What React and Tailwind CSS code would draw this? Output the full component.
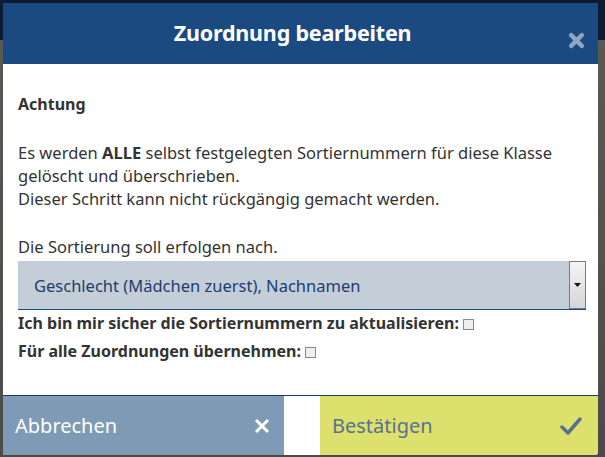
import React from 'react';

const font = { fontFamily: '"Noto Sans", "Open Sans", sans-serif' };

const Box = () => (
    <span className="inline-block w-[11px] h-[11px] ml-[4px] border border-[#8a8a8a] bg-[#eeeeee] align-[-1px]" />
);

const App = () => {
    return (
        <div
            className="w-[605px] h-[457px] pl-[3px] pt-[3px] bg-[linear-gradient(to_bottom,#0b1b33_0,#0b1b33_40px,#5a5a52_40px,#4a4a4a_100%)]"
            style={font}
        >
            <div className="w-[595px] h-[452px] flex flex-col bg-white rounded-br-[3px] overflow-hidden">
                <div className="relative h-[61px] shrink-0 flex items-center justify-center pr-[16px] bg-[#1b4a80]">
                    <h1 className="text-[21.5px] font-bold text-white tracking-[-0.2px]">Zuordnung bearbeiten</h1>
                    <span className="absolute right-[13px] top-[29px] text-[#8ea4c2]">
                        <svg width="17" height="17" viewBox="0 0 16 16">
                            <path d="M3 3 L13 13 M13 3 L3 13" stroke="currentColor" strokeWidth="4.2" strokeLinecap="round" />
                        </svg>
                    </span>
                </div>

                <div className="flex-1 pl-[15px] pr-[12px] pt-[29px] text-[16.5px] text-[#333] leading-[23px]">
                    <p className="font-bold text-[16px]">Achtung</p>
                    <p className="mt-[25px]">
                        Es werden <b>ALLE</b> selbst festgelegten Sortiernummern für diese Klasse
                        <br />
                        gelöscht und überschrieben.
                        <br />
                        Dieser Schritt kann nicht rückgängig gemacht werden.
                    </p>
                    <p className="mt-[25px]">Die Sortierung soll erfolgen nach.</p>
                    <div className="mt-[3px] flex h-[49px] bg-[#c4ced9] border-b border-[#1b4a80]">
                        <div className="flex-1 flex items-center pl-[16px] text-[#1c3d6e]">
                            Geschlecht (Mädchen zuerst), Nachnamen
                        </div>
                        <div className="w-[17px] flex items-center justify-center border border-[#7a7a7a] bg-[linear-gradient(to_bottom,#f4f4f4,#d6d6d6)]">
                            <svg width="7" height="4" viewBox="0 0 7 4">
                                <path d="M0 0 H7 L3.5 4 Z" fill="#111" />
                            </svg>
                        </div>
                    </div>
                    <p className="mt-[2px] font-bold text-[16px]">
                        Ich bin mir sicher die Sortiernummern zu aktualisieren:
                        <Box />
                    </p>
                    <p className="mt-[5px] font-bold text-[16px]">
                        Für alle Zuordnungen übernehmen:
                        <Box />
                    </p>
                </div>

                <div className="h-[1px] bg-[#1b3a66]" />
                <div className="h-[59px] shrink-0 flex text-[20px]">
                    <button className="w-[281px] flex items-center justify-between pl-[12px] pr-[14px] bg-[#7f9ab4] text-white">
                        <span>Abbrechen</span>
                        <svg width="16" height="16" viewBox="0 0 16 16">
                            <path d="M2 2 L14 14 M14 2 L2 14" stroke="white" strokeWidth="3" />
                        </svg>
                    </button>
                    <div className="w-[36px] bg-white" />
                    <button className="flex-1 flex items-center justify-between pl-[12px] pr-[16px] bg-[#dce06d] text-[#5a7091]">
                        <span>Bestätigen</span>
                        <svg width="22" height="20" viewBox="0 0 22 20">
                            <path d="M2 11 L8 17 L20 3" fill="none" stroke="#5a7091" strokeWidth="3.5" strokeLinecap="round" strokeLinejoin="round" />
                        </svg>
                    </button>
                </div>
            </div>
        </div>
    );
};

export default App;
